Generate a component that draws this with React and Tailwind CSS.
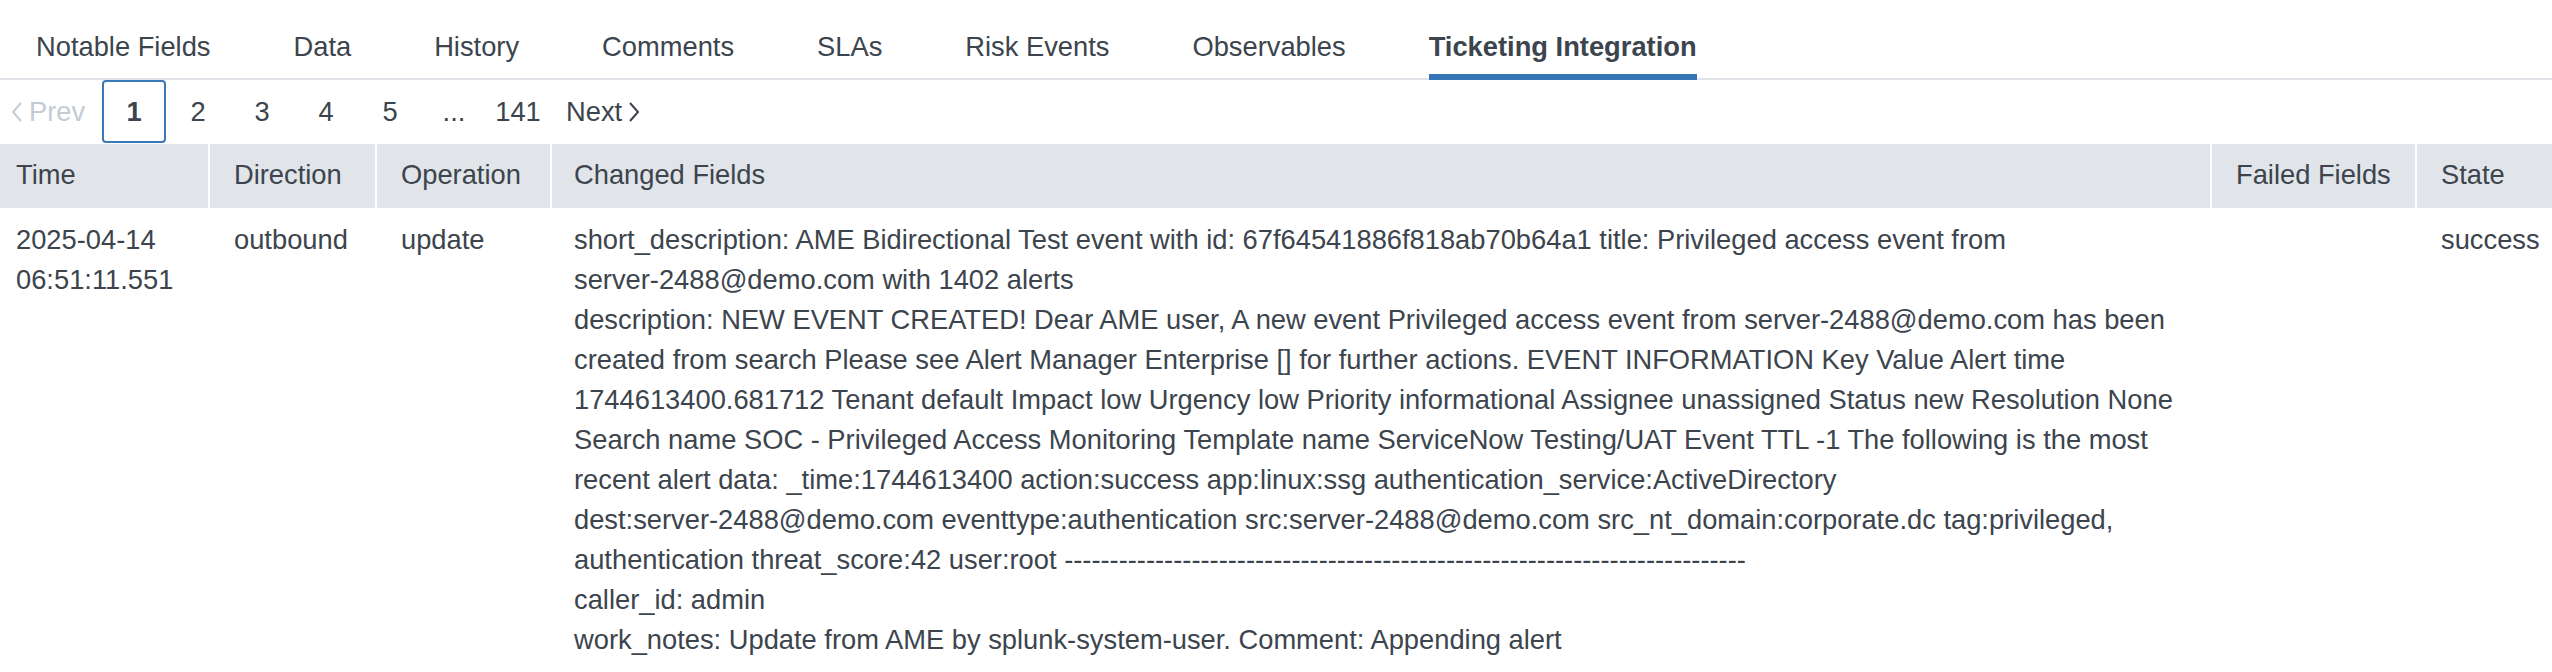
import React from "react";

const tabs = [
  "Notable Fields",
  "Data",
  "History",
  "Comments",
  "SLAs",
  "Risk Events",
  "Observables",
  "Ticketing Integration",
];

const pages = ["1", "2", "3", "4", "5", "...", "141"];

const changedFields = [
  "short_description: AME Bidirectional Test event with id: 67f64541886f818ab70b64a1 title: Privileged access event from",
  "server-2488@demo.com with 1402 alerts",
  "description: NEW EVENT CREATED! Dear AME user, A new event Privileged access event from server-2488@demo.com has been",
  "created from search Please see Alert Manager Enterprise [] for further actions. EVENT INFORMATION Key Value Alert time",
  "1744613400.681712 Tenant default Impact low Urgency low Priority informational Assignee unassigned Status new Resolution None",
  "Search name SOC - Privileged Access Monitoring Template name ServiceNow Testing/UAT Event TTL -1 The following is the most",
  "recent alert data: _time:1744613400 action:success app:linux:ssg authentication_service:ActiveDirectory",
  "dest:server-2488@demo.com eventtype:authentication src:server-2488@demo.com src_nt_domain:corporate.dc tag:privileged,",
  "authentication threat_score:42 user:root " + "-".repeat(75),
  "caller_id: admin",
  "work_notes: Update from AME by splunk-system-user. Comment: Appending alert",
];

function Chevron({ dir }) {
  return (
    <svg width="14" height="20" viewBox="0 0 14 20" fill="none" stroke="currentColor" strokeWidth="2">
      {dir === "left" ? (
        <polyline points="11,1 3,10 11,19" />
      ) : (
        <polyline points="3,1 11,10 3,19" />
      )}
    </svg>
  );
}

export default function App() {
  return (
    <div className="w-[2552px] bg-white font-['Liberation_Sans',Arial,sans-serif] text-[27.3px] leading-[40px] text-[#3c444d]">
      {/* Tabs */}
      <div className="flex gap-[83px] border-b-2 border-[#e1e4e9] pl-[36px] pt-[27px]">
        {tabs.map((tab) => {
          const active = tab === "Ticketing Integration";
          return (
            <div
              key={tab}
              className={
                active
                  ? "-mb-[2px] whitespace-nowrap border-b-[6px] border-[#3575b6] pb-[7px] font-bold"
                  : "-mb-[2px] whitespace-nowrap border-b-[6px] border-transparent pb-[7px]"
              }
            >
              {tab}
            </div>
          );
        })}
      </div>

      {/* Pagination */}
      <div className="flex h-[64px] items-start">
        <div className="flex h-[63px] w-[102px] items-center gap-[5px] pl-[10px] text-[#c3cbd4]">
          <Chevron dir="left" />
          <span>Prev</span>
        </div>
        {pages.map((p) =>
          p === "1" ? (
            <div
              key={p}
              className="flex h-[63px] w-[64px] items-center justify-center rounded-[4px] border-2 border-[#3b78b6] font-bold"
            >
              {p}
            </div>
          ) : (
            <div key={p} className="flex h-[63px] w-[64px] items-center justify-center">
              {p}
            </div>
          )
        )}
        <div className="flex h-[63px] items-center gap-[5px] pl-[16px]">
          <span>Next</span>
          <Chevron dir="right" />
        </div>
      </div>

      {/* Table */}
      <div className="grid grid-cols-[208px_165px_173px_1658px_203px_135px] gap-x-[2px]">
        <div className="h-[64px] whitespace-nowrap bg-[#e1e4e9] pl-4 pt-[11px]">Time</div>
        <div className="h-[64px] whitespace-nowrap bg-[#e1e4e9] pl-6 pt-[11px]">Direction</div>
        <div className="h-[64px] whitespace-nowrap bg-[#e1e4e9] pl-6 pt-[11px]">Operation</div>
        <div className="h-[64px] whitespace-nowrap bg-[#e1e4e9] pl-[22px] pt-[11px]">Changed Fields</div>
        <div className="h-[64px] whitespace-nowrap bg-[#e1e4e9] pl-6 pt-[11px]">Failed Fields</div>
        <div className="h-[64px] whitespace-nowrap bg-[#e1e4e9] pl-6 pt-[11px]">State</div>

        <div className="pl-4 pt-3">
          <div>2025-04-14</div>
          <div>06:51:11.551</div>
        </div>
        <div className="pl-6 pt-3">outbound</div>
        <div className="pl-6 pt-3">update</div>
        <div className="pl-[22px] pt-3 pb-2">
          {changedFields.map((line, i) => (
            <div key={i} className="whitespace-nowrap">
              {line}
            </div>
          ))}
        </div>
        <div className="pl-6 pt-3"></div>
        <div className="pl-6 pt-3">success</div>
      </div>
    </div>
  );
}
